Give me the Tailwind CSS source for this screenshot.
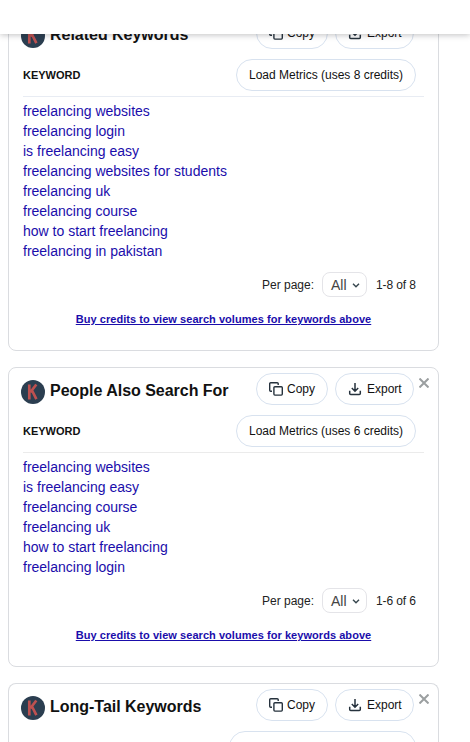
<!DOCTYPE html>
<html lang="en">
<head>
    <meta charset="UTF-8">
    <meta name="viewport" content="width=device-width, initial-scale=1.0">
    <title>Keywords</title>
    <script src="https://cdn.jsdelivr.net/npm/@tailwindcss/browser@4"></script>
</head>
<body class="bg-white text-[#111] font-['Liberation_Sans',Arial,sans-serif] h-[742px] overflow-hidden relative">
    <!-- shared icons -->
    <svg class="hidden">
        <symbol id="logo" viewBox="0 0 24 24">
            <circle cx="12" cy="12" r="12" fill="#2b3e50"/>
            <path d="M8.3 4.5V19.5M15.3 4.5L9.4 12.2M11 10.5L15.4 19.2" fill="none" stroke="#bd5150" stroke-width="2.7"/>
        </symbol>
        <symbol id="copy" viewBox="0 0 14 14">
            <path d="M9.2 3V1.7a1 1 0 0 0-1-1H1.7a1 1 0 0 0-1 1v6.5a1 1 0 0 0 1 1H3" fill="none" stroke="#26323d" stroke-width="1.4"/>
            <rect x="4.9" y="4.7" width="8.4" height="8.4" rx="1" fill="none" stroke="#26323d" stroke-width="1.4"/>
        </symbol>
        <symbol id="export" viewBox="0 0 14 14">
            <path d="M1.7 8.7V11.4a1 1 0 0 0 1 1H11.3a1 1 0 0 0 1-1V8.7M7 1V9M3.8 6L7 9.2L10.2 6" fill="none" stroke="#26323d" stroke-width="1.5"/>
        </symbol>
        <symbol id="close" viewBox="0 0 10 10">
            <path d="M.5 .5L9.5 9.5M9.5 .5L.5 9.5" fill="none" stroke="#9b9fa0" stroke-width="2"/>
        </symbol>
    </svg>

    <!-- top bar -->
    <div class="absolute z-10 inset-x-0 top-0 h-[34px] bg-white shadow-[0_1px_6px_rgba(32,33,36,0.28)]"></div>

    <div class="flex flex-col gap-4 pt-[11px] pl-2">
        <!-- Related Keywords -->
        <div class="relative w-[431px] shrink-0 border border-[#dadce0] rounded-lg px-3.5 pt-[5px] pb-[21px]">
            <div class="flex h-8 items-center -ml-0.5 pr-2.5">
                <svg class="size-6 mt-[5px]"><use href="#logo"/></svg>
                <h2 class="ml-[5px] mt-[3px] text-base font-bold whitespace-nowrap tracking-[-0.02px]">Related Keywords</h2>
                <button class="ml-auto w-[72px] h-8 border border-[#d8e2ef] rounded-full flex items-center pl-3 text-xs"><svg class="size-3.5 mr-1"><use href="#copy"/></svg>Copy</button>
                <button class="ml-[7px] w-[79px] h-8 border border-[#d8e2ef] rounded-full flex items-center pl-3 text-xs"><svg class="size-3.5 mr-[5px]"><use href="#export"/></svg>Export</button>
            </div>
            <svg class="absolute top-[10px] right-[9px] size-2.5"><use href="#close"/></svg>
            <div class="mt-2.5 pb-[5px] pr-2 flex items-center justify-between border-b border-[#e8ecf3]">
                <span class="text-[11px] font-bold">KEYWORD</span>
                <button class="w-[180px] h-8 border border-[#d8e2ef] rounded-full text-xs">Load Metrics (uses 8 credits)</button>
            </div>
            <ul class="pt-1 text-sm leading-5 text-[#1a0dab]">
                <li>freelancing websites</li>
                <li>freelancing login</li>
                <li>is freelancing easy</li>
                <li>freelancing websites for students</li>
                <li>freelancing uk</li>
                <li>freelancing course</li>
                <li>how to start freelancing</li>
                <li>freelancing in pakistan</li>
            </ul>
            <div class="mt-[11px] h-[25px] pr-2 flex items-center justify-end text-xs text-[#222]">
                <span>Per page:</span>
                <div class="ml-2 mr-[9px] w-[45px] h-[25px] border border-[#e4e4e8] rounded-lg flex items-center pl-2 text-sm text-[#444]">All<svg class="ml-[5px] mt-0.5 w-2 h-[5px]" viewBox="0 0 8 5"><path d="M1 .8L4 3.8L7 .8" fill="none" stroke="#37474f" stroke-width="1.4"/></svg></div>
                <span class="w-10 whitespace-nowrap tracking-[-0.1px]">1-8 of 8</span>
            </div>
            <div class="mt-3 h-5 leading-5 text-center text-[11px] font-bold tracking-[0.05px] text-[#1a0dab] underline">Buy credits to view search volumes for keywords above</div>
        </div>

        <!-- People Also Search For -->
        <div class="relative w-[431px] shrink-0 border border-[#dadce0] rounded-lg px-3.5 pt-[5px] pb-[21px]">
            <div class="flex h-8 items-center -ml-0.5 pr-2.5">
                <svg class="size-6 mt-[5px]"><use href="#logo"/></svg>
                <h2 class="ml-[5px] mt-[3px] text-base font-bold whitespace-nowrap tracking-[-0.02px]">People Also Search For</h2>
                <button class="ml-auto w-[72px] h-8 border border-[#d8e2ef] rounded-full flex items-center pl-3 text-xs"><svg class="size-3.5 mr-1"><use href="#copy"/></svg>Copy</button>
                <button class="ml-[7px] w-[79px] h-8 border border-[#d8e2ef] rounded-full flex items-center pl-3 text-xs"><svg class="size-3.5 mr-[5px]"><use href="#export"/></svg>Export</button>
            </div>
            <svg class="absolute top-[10px] right-[9px] size-2.5"><use href="#close"/></svg>
            <div class="mt-2.5 pb-[5px] pr-2 flex items-center justify-between border-b border-[#ebebeb]">
                <span class="text-[11px] font-bold">KEYWORD</span>
                <button class="w-[180px] h-8 border border-[#d8e2ef] rounded-full text-xs">Load Metrics (uses 6 credits)</button>
            </div>
            <ul class="pt-1 text-sm leading-5 text-[#1a0dab]">
                <li>freelancing websites</li>
                <li>is freelancing easy</li>
                <li>freelancing course</li>
                <li>freelancing uk</li>
                <li>how to start freelancing</li>
                <li>freelancing login</li>
            </ul>
            <div class="mt-[11px] h-[25px] pr-2 flex items-center justify-end text-xs text-[#222]">
                <span>Per page:</span>
                <div class="ml-2 mr-[9px] w-[45px] h-[25px] border border-[#e4e4e8] rounded-lg flex items-center pl-2 text-sm text-[#444]">All<svg class="ml-[5px] mt-0.5 w-2 h-[5px]" viewBox="0 0 8 5"><path d="M1 .8L4 3.8L7 .8" fill="none" stroke="#37474f" stroke-width="1.4"/></svg></div>
                <span class="w-10 whitespace-nowrap tracking-[-0.1px]">1-6 of 6</span>
            </div>
            <div class="mt-3 h-5 leading-5 text-center text-[11px] font-bold tracking-[0.05px] text-[#1a0dab] underline">Buy credits to view search volumes for keywords above</div>
        </div>

        <!-- Long-Tail Keywords -->
        <div class="relative w-[431px] h-[59px] shrink-0 overflow-hidden border border-b-0 border-[#dadce0] rounded-t-lg px-3.5 pt-[5px]">
            <div class="flex h-8 items-center -ml-0.5 pr-2.5">
                <svg class="size-6 mt-[5px]"><use href="#logo"/></svg>
                <h2 class="ml-[5px] mt-[3px] text-base font-bold whitespace-nowrap tracking-[-0.02px]">Long-Tail Keywords</h2>
                <button class="ml-auto w-[72px] h-8 border border-[#d8e2ef] rounded-full flex items-center pl-3 text-xs"><svg class="size-3.5 mr-1"><use href="#copy"/></svg>Copy</button>
                <button class="ml-[7px] w-[79px] h-8 border border-[#d8e2ef] rounded-full flex items-center pl-3 text-xs"><svg class="size-3.5 mr-[5px]"><use href="#export"/></svg>Export</button>
            </div>
            <svg class="absolute top-[10px] right-[9px] size-2.5"><use href="#close"/></svg>
            <div class="mt-2.5 pr-2 flex justify-end">
                <button class="w-[187px] h-8 border border-[#d8e2ef] rounded-full"></button>
            </div>
        </div>
    </div>
</body>
</html>
